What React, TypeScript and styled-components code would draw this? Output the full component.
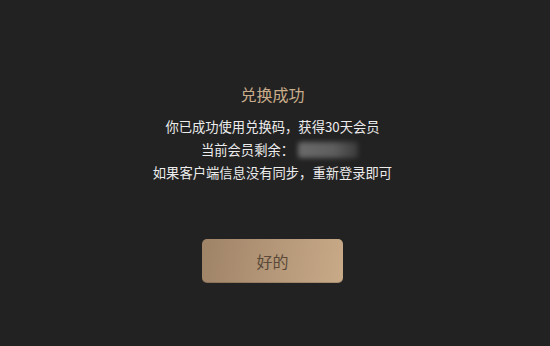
import React from "react";
import styled, { createGlobalStyle } from "styled-components";

const GlobalStyle = createGlobalStyle`
  html, body {
    margin: 0;
    padding: 0;
    background: #222222;
  }
  body {
    font-family: "Noto Sans CJK SC", "Noto Sans", sans-serif;
  }
`;

const Dialog = styled.div`
  width: 550px;
  height: 346px;
  box-sizing: border-box;
  background: #222222;
  display: flex;
  flex-direction: column;
  align-items: center;
  padding: 82px 5px 0 0;
`;

const Title = styled.h2`
  margin: 0;
  font-size: 16px;
  font-weight: 400;
  line-height: 24px;
  color: #c9ad8b;
`;

const Message = styled.div`
  margin-top: 9px;
  display: flex;
  flex-direction: column;
  align-items: center;
  font-size: 13.3px;
  line-height: 23px;
  color: #ececec;
`;

const Line = styled.p<{ $indent?: number }>`
  margin: 0;
  padding-left: ${(p) => p.$indent ?? 0}px;
  display: flex;
  align-items: center;
`;

const Hidden = styled.span`
  display: inline-block;
  width: 60px;
  height: 16px;
  margin-left: 4px;
  border-radius: 3px;
  background: linear-gradient(90deg, #6a6a6a 0%, #5e5e5e 60%, #3a3a3a 100%);
  filter: blur(2.5px);
`;

const Confirm = styled.button`
  margin-top: 55px;
  width: 141px;
  height: 44px;
  border: none;
  border-radius: 5px;
  background: linear-gradient(100deg, #9f8367 0%, #b49778 50%, #c8aa88 100%);
  box-shadow: inset 0 -1px 0 rgba(0, 0, 0, 0.15);
  color: #5b4a39;
  font-family: "Noto Sans CJK SC", "Noto Sans", sans-serif;
  font-size: 16px;
  cursor: pointer;
  outline: none;
`;

export default function App() {
  return (
    <>
      <GlobalStyle />
      <Dialog>
        <Title>兑换成功</Title>
        <Message>
          <Line>你已成功使用兑换码，获得30天会员</Line>
          <Line $indent={14}>
            当前会员剩余：<Hidden />
          </Line>
          <Line>如果客户端信息没有同步，重新登录即可</Line>
        </Message>
        <Confirm>好的</Confirm>
      </Dialog>
    </>
  );
}
